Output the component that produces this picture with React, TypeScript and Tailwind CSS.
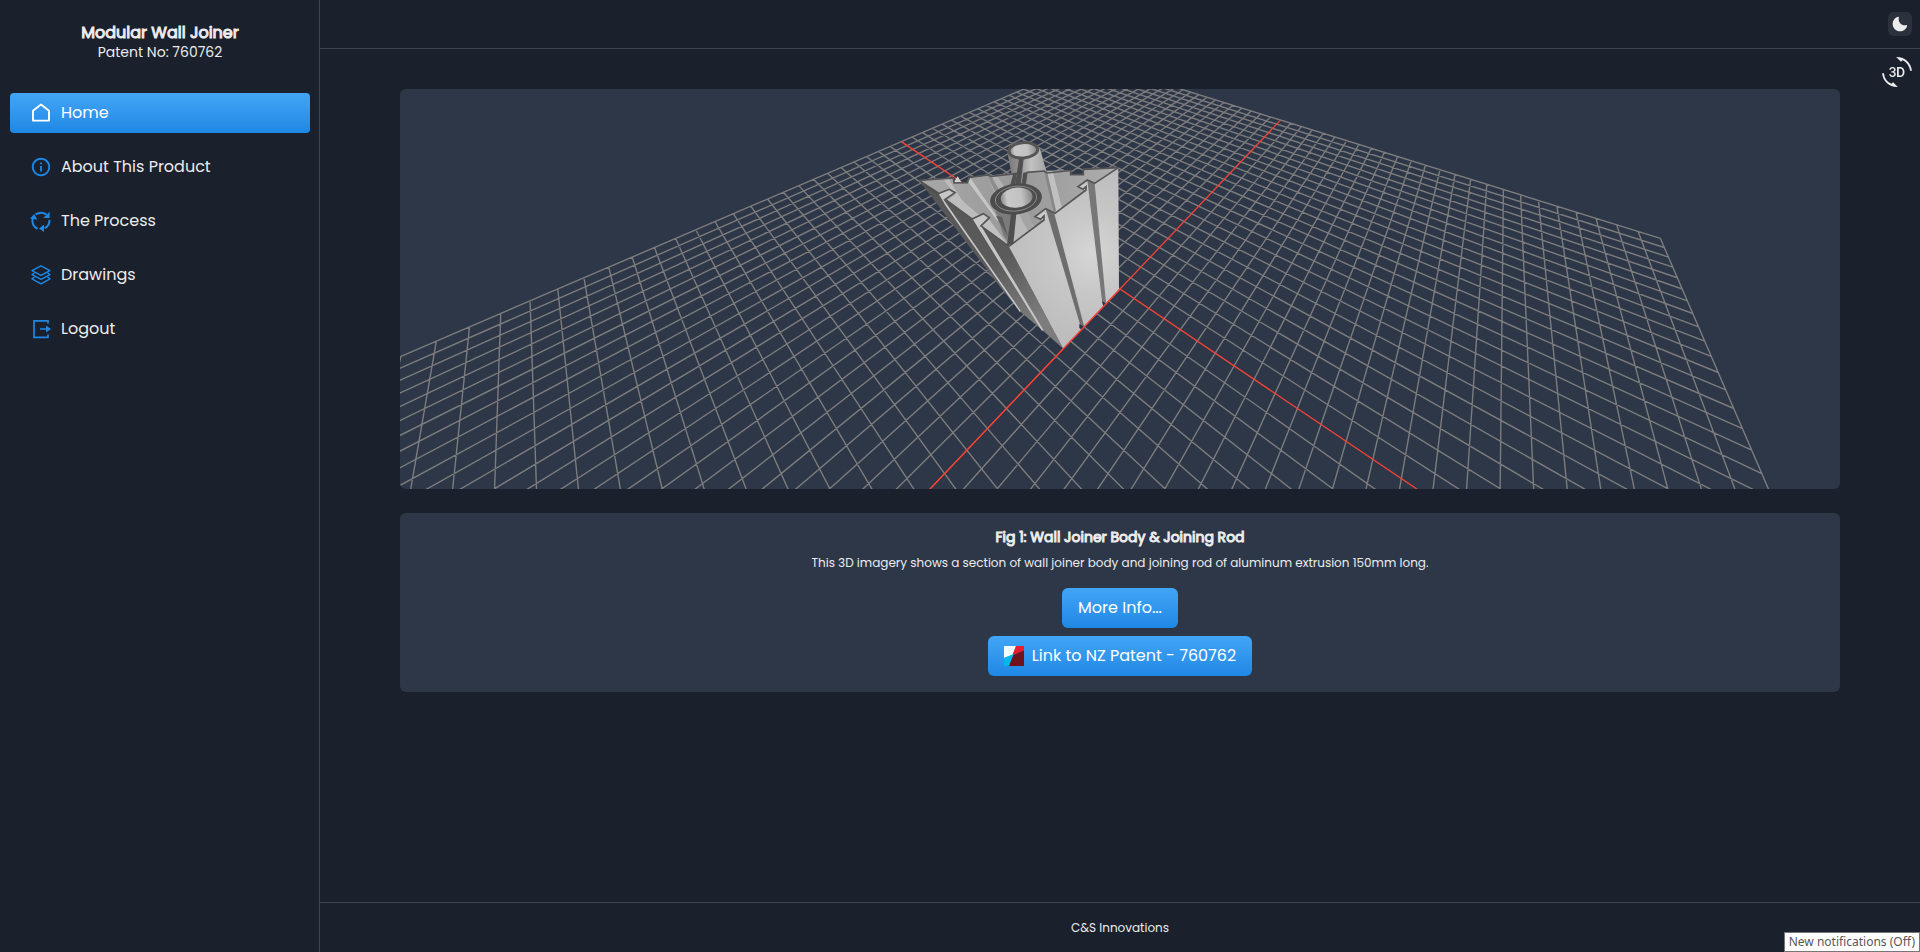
import React from "react";
import { RiInformationLine } from "react-icons/ri";
import { Md3dRotation } from "react-icons/md";

const FOCAL = 200 / Math.tan((37.5 * Math.PI) / 180);
const CAMERA = { x: 4, y: 10, z: 5 };
const HALF = 20;
const STEP = HALF / 25;
const NEAR = 0.6;

type Point = [number, number];

const ground = Math.hypot(CAMERA.x, CAMERA.z);
const distance = Math.hypot(ground, CAMERA.y);

function depth(x: number, z: number) {
  return distance - (x * CAMERA.x + z * CAMERA.z) / distance;
}

function project(x: number, z: number): Point {
  const d = depth(x, z);
  const right = (x * CAMERA.z - z * CAMERA.x) / ground;
  const up = (-(x * CAMERA.x + z * CAMERA.z) / ground) * (CAMERA.y / distance);
  return [(FOCAL * right) / d, (-FOCAL * up) / d];
}

function gridLine(x1: number, z1: number, x2: number, z2: number) {
  const start = depth(x1, z1);
  const end = depth(x2, z2);
  if (start < NEAR) return "";
  const t = end < NEAR ? (start - NEAR) / (start - end) : 1;
  const a = project(x1, z1);
  const b = project(x1 + (x2 - x1) * t, z1 + (z2 - z1) * t);
  return `M${a[0].toFixed(2)} ${a[1].toFixed(2)}L${b[0].toFixed(2)} ${b[1].toFixed(2)}`;
}

const offsets = Array.from({ length: 51 }, (_, i) => (i - 25) * STEP);
const greyPath = offsets
  .filter((o) => Math.abs(o) > 0.01)
  .map((o) => gridLine(o, -HALF, o, HALF) + gridLine(-HALF, o, HALF, o))
  .join("");
const redPath = gridLine(0, -HALF, 0, HALF) + gridLine(-HALF, 0, HALF, 0);

function Joiner() {
  return (
    <g transform="translate(-220 -169) scale(0.33333)">
      <defs>
        <linearGradient id="rod" x1="0" x2="1" y1="0" y2="0">
          <stop offset="0" stopColor="#777" />
          <stop offset="0.3" stopColor="#929292" />
          <stop offset="0.6" stopColor="#c2c2c2" />
          <stop offset="1" stopColor="#a2a2a2" />
        </linearGradient>
        <linearGradient id="bore" x1="0" x2="1" y1="0" y2="0">
          <stop offset="0" stopColor="#8a8a8a" />
          <stop offset="0.2" stopColor="#c8c8c8" />
          <stop offset="0.65" stopColor="#c2c2c2" />
          <stop offset="1" stopColor="#858585" />
        </linearGradient>
        <linearGradient id="inner" x1="0" x2="1" y1="0" y2="0">
          <stop offset="0" stopColor="#a8a8a8" />
          <stop offset="0.5" stopColor="#999" />
          <stop offset="1" stopColor="#adadad" />
        </linearGradient>
        <linearGradient id="side" x1="0" x2="0.4" y1="0" y2="1">
          <stop offset="0" stopColor="#555" />
          <stop offset="0.6" stopColor="#5b5b5b" />
          <stop offset="1" stopColor="#7c7c7c" />
        </linearGradient>
        <radialGradient id="front" gradientUnits="userSpaceOnUse" cx="575" cy="400" r="260">
          <stop offset="0" stopColor="#d6d6d6" />
          <stop offset="0.5" stopColor="#c6c6c6" />
          <stop offset="1" stopColor="#bdbdbd" />
        </radialGradient>
      </defs>

      <path d="M322 98L336 168L440 156L420 86Z" fill="url(#rod)" />
      <path d="M57 181L160 174L162 189L202 188L208 172L355 158L430 152L512 150L512 163L550 163L550 147L655 143L327 380Z" fill="url(#inner)" />
      <path d="M130 178L146 177L222 296L214 290Z" fill="#bcbcbc" />
      <path d="M202 182L212 175L302 306L290 300Z" fill="#c6c6c6" />
      <path d="M262 168L290 165L326 220L326 300L302 262Z" fill="#b2b2b2" />
      <path d="M262 168L274 167L312 238L300 245Z" fill="#8d8d8d" />
      <path d="M286 272L340 284L327 370L310 346Z" fill="#7b7b7b" />
      <path d="M288 288L306 290L324 350Z" fill="#5b5b5b" />
      <path d="M348 285L368 276L410 328L327 380Z" fill="#b9b9b9" />
      <path d="M355 280L382 270L400 320L384 334Z" fill="#a4a4a4" />
      <path d="M432 155L458 154L486 264L464 280Z" fill="#c0c0c0" />
      <path d="M432 155L441 154L468 272L462 279Z" fill="#868686" />
      <path d="M161 187L173 169L184 187Z" fill="#d2d2d2" />

      <path d="M57 181L117 220L143 237L218 297L243 318L327 380L490 686L430 633L362 576L300 500Z" fill="url(#side)" />
      <path d="M116 221L148 208L163 220L140 238L130 238L362 572L360 577L136 256Z" fill="#c6c6c6" />
      <path d="M140 239L166 224L238 286L216 297Z" fill="#bdbdbd" />
      <path d="M218 297L250 281L266 294L243 316L240 312L430 630L426 633L222 304Z" fill="#c6c6c6" />
      <path d="M243 318L268 299L327 378Z" fill="#c0c0c0" />

      <path d="M327 380L432 300L405 290L437 266L465 280L558 210L534 200L562 180L584 190L655 143L657 508L490 686Z" fill="url(#front)" />
      <path d="M437 266L463 281L552 618L544 626Z" fill="#6d6d6d" />
      <path d="M562 181L584 191L618 548L607 550Z" fill="#777" />
      <path d="M538 612L552 620L544 629L538 624ZM606 544L618 550L610 560Z" fill="#293449" />
      <path d="M410 291L434 274L440 300L434 304Z" fill="#c9c9c9" />
      <path d="M536 202L560 186L565 208L558 212Z" fill="#c9c9c9" />

      <g fill="none" stroke="#555" strokeWidth="5" strokeLinejoin="miter">
        <path d="M57 181L160 174L162 189L202 188L208 172L264 165L274 169L355 160M380 157L432 153L442 159L512 151L512 164L550 164L550 148L655 143" />
        <path d="M57 181L117 220L148 208L165 218L136 238L216 297L250 281L268 293L243 318L327 379" />
        <path d="M327 379L432 300L432 288L422 298L405 290L437 266L465 280L558 210L558 200L549 208L534 200L562 180L584 190L655 143" />
      </g>
      <path d="M57 181L117 220L112 227Z" fill="#4f4f4f" />

      <ellipse cx="370" cy="91" rx="43" ry="23" fill="url(#bore)" stroke="#555" strokeWidth="9" transform="rotate(-5 370 91)" />
      <path d="M357 116L371 114L362 196L345 196Z" fill="#505050" />
      <path d="M340 160L350 159L346 195L330 198ZM370 158L383 156L378 192L364 194Z" fill="#505050" />
      <ellipse cx="348" cy="237" rx="78" ry="46" fill="#4c4c4c" transform="rotate(-7 348 237)" />
      <ellipse cx="348" cy="236" rx="62" ry="37" fill="none" stroke="#a6a6a6" strokeWidth="2" transform="rotate(-7 348 236)" />
      <ellipse cx="350" cy="233" rx="48" ry="30" fill="url(#bore)" transform="rotate(-7 350 233)" />
      <path d="M333 283L349 281L340 371L321 376Z" fill="#4f4f4f" />
    </g>
  );
}

function Viewer() {
  return (
    <svg
      role="img"
      aria-label="Wall joiner body and joining rod"
      className="block h-[400px] w-full"
      viewBox="-720 -200 1440 400"
      preserveAspectRatio="xMidYMid slice"
    >
      <path d={greyPath} stroke="#7c7c7c" strokeWidth="1.4" fill="none" />
      <path d={redPath} stroke="#f44336" strokeWidth="1.3" fill="none" />
      <Joiner />
      <path d={gridLine(0, 0, 0, HALF)} stroke="#f44336" strokeWidth="1.2" fill="none" />
    </svg>
  );
}

const iconClass = "h-[22px] w-[22px] shrink-0";

function HomeIcon() {
  return (
    <svg className={iconClass} viewBox="0 0 22 22" fill="none" stroke="currentColor" strokeWidth="1.9" strokeLinejoin="round">
      <path d="M3 8.7L11 2.6L19 8.7V18.6H3Z" />
    </svg>
  );
}

function ProcessIcon() {
  return (
    <svg className={iconClass} viewBox="0 0 22 22" fill="none" stroke="currentColor" strokeWidth="2">
      <path d="M5.6 4.6A8.4 8.4 0 0 1 16.4 4.6M19.4 9.8A8.4 8.4 0 0 1 14.6 18.2M7.6 18.8A8.4 8.4 0 0 1 2.9 8" />
      <path d="M19.6 1.8V8H13.2ZM0 8.8L4.2 4L7.4 9.4ZM14 14.4V22L9 18.4Z" fill="currentColor" stroke="none" />
    </svg>
  );
}

function LayersIcon() {
  return (
    <svg className={iconClass} viewBox="0 0 22 22" fill="none" stroke="currentColor" strokeWidth="1.4" strokeLinejoin="round">
      <path d="M11 1.8L20 6.6L11 11.4L2 6.6ZM4.4 9L2 10.6L11 15.4L20 10.6L17.6 9M4.4 13.2L2 14.8L11 19.8L20 14.8L17.6 13.2" />
    </svg>
  );
}

function LogoutIcon() {
  return (
    <svg className={iconClass} viewBox="0 0 22 22" fill="none" stroke="currentColor" strokeWidth="1.7">
      <path d="M18 5.6V2.8H4V19.4H18V16.4M10 11H18" />
      <path d="M16 7.4L21 11L16 14.6Z" fill="currentColor" stroke="none" />
    </svg>
  );
}

const items = [
  { label: "Home", icon: <HomeIcon />, active: true },
  { label: "About This Product", icon: <RiInformationLine className={iconClass} /> },
  { label: "The Process", icon: <ProcessIcon /> },
  { label: "Drawings", icon: <LayersIcon /> },
  { label: "Logout", icon: <LogoutIcon /> },
];

export default function App() {
  return (
    <div className="flex min-h-screen bg-[#1a202c] font-['Poppins','Inter',sans-serif] text-[#ececed]">
      <aside className="flex w-80 shrink-0 flex-col border-r border-[#3f444e] px-[10px] pr-[9px]">
        <div className="pt-[23px] text-center">
          <h1 className="text-base leading-5 font-normal [-webkit-text-stroke:1px_currentColor]">Modular Wall Joiner</h1>
          <p className="text-sm leading-[19px]">Patent No: 760762</p>
        </div>
        <nav className="mt-[31px] flex flex-col gap-[14px]">
          {items.map((item) => (
            <a
              key={item.label}
              href="#"
              aria-current={item.active ? "page" : undefined}
              className={
                item.active
                  ? "flex h-10 items-center gap-[9px] rounded bg-linear-to-b from-[#42a5f5] to-[#1e88e5] px-5 text-white"
                  : "flex h-10 items-center gap-[9px] rounded px-5"
              }
            >
              <span className={item.active ? "text-white" : "text-[#1e88e5]"}>{item.icon}</span>
              {item.label}
            </a>
          ))}
        </nav>
      </aside>

      <div className="flex min-w-0 grow flex-col">
        <header className="flex h-[49px] items-center justify-end border-b border-[#3f444e] px-2">
          <button aria-label="Toggle dark mode" className="flex h-6 w-6 items-center justify-center rounded-md bg-[#2c323d]">
            <svg className="h-4 w-4" viewBox="0 0 24 24" fill="currentColor">
              <path d="M21.4,13.7C20.6,13.9,19.8,14,19,14c-5,0-9-4-9-9c0-0.8,0.1-1.6,0.3-2.4c0.1-0.3,0-0.7-0.3-1c-0.3-0.3-0.6-0.4-1-0.3C4.3,2.7,1,7.1,1,12c0,6.1,4.9,11,11,11c4.9,0,9.3-3.3,10.6-8.1c0.1-0.3,0-0.7-0.3-1C22.1,13.7,21.7,13.6,21.4,13.7z" />
            </svg>
          </button>
        </header>

        <main className="relative grow pt-10">
          <button aria-label="Rotate model" className="absolute top-2 right-2">
            <Md3dRotation className="h-[30px] w-[30px]" />
          </button>
          <div className="mx-auto flex w-[90%] flex-col gap-6">
            <section className="overflow-hidden rounded-md bg-[#2d3748]">
              <Viewer />
            </section>
            <section className="flex flex-col items-center rounded-md bg-[#2d3748] pt-3 pb-4 text-center">
              <h2 className="text-sm leading-6 font-normal [-webkit-text-stroke:1px_currentColor]">
                Fig 1: Wall Joiner Body &amp; Joining Rod
              </h2>
              <p className="mt-1 text-xs leading-5">
                This 3D imagery shows a section of wall joiner body and joining rod of aluminum extrusion 150mm long.
              </p>
              <button className="mt-[15px] h-10 rounded-md bg-linear-to-b from-[#42a5f5] to-[#1e88e5] px-4 text-white">
                More Info...
              </button>
              <a
                href="#"
                className="mt-2 flex h-10 items-center gap-2 rounded-md bg-linear-to-b from-[#42a5f5] to-[#1e88e5] px-4 text-white"
              >
                <svg className="h-5 w-5" viewBox="0 0 20 20">
                  <path d="M0 0H12L8.6 8.6L0 12Z" fill="#f4fbff" />
                  <path d="M12 0H20V5L8.6 8.8Z" fill="#ec1c2e" />
                  <path d="M20 4.6V20H4.8L9.2 9Z" fill="#70121b" />
                  <path d="M0 12L9.2 8.6L4.8 20H0Z" fill="#00b9ea" />
                </svg>
                Link to NZ Patent - 760762
              </a>
            </section>
          </div>
        </main>

        <footer className="flex h-[50px] items-center justify-center border-t border-[#3f444e] text-xs">
          C&amp;S Innovations
        </footer>
      </div>

      <div className="fixed right-0 bottom-0 flex h-5 items-center border border-[#767676] bg-white px-1 font-['Noto_Sans',sans-serif] text-xs text-[#575757]">
        New notifications (Off)
      </div>
    </div>
  );
}
